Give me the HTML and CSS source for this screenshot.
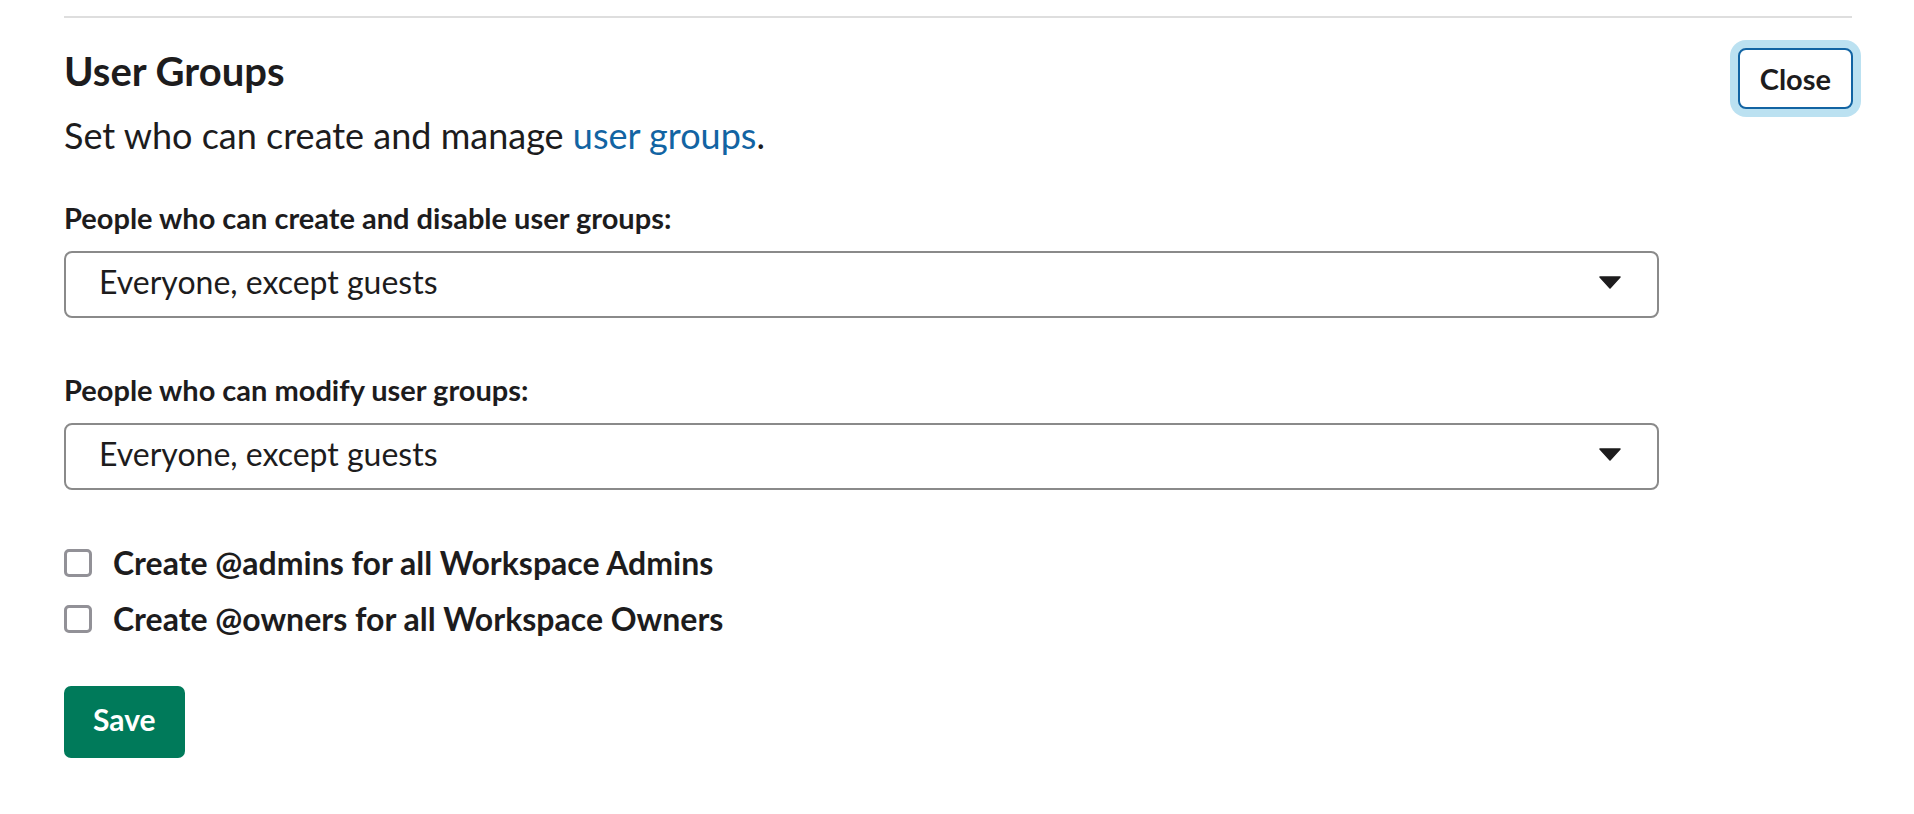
FILE: index.html
```html
<!DOCTYPE html>
<html lang="en">
<head>
  <meta charset="UTF-8" />
  <meta name="viewport" content="width=device-width, initial-scale=1.0"/>
  <title>User Groups</title>
  <link rel="stylesheet" href="styles.css">
</head>
<body>
  <div class="page">
    <div class="divider"></div>

    <div class="section-head">
      <div>
        <h2>User Groups</h2>
        <p class="desc">Set who can create and manage <a href="#">user groups</a>.</p>
      </div>
      <button class="btn-close" type="button">Close</button>
    </div>

    <form class="settings">
      <label class="field-label">People who can create and disable user groups:</label>
      <div class="select">
        <span>Everyone, except guests</span>
        <svg class="caret" width="22" height="13" viewBox="0 0 22 13"><path d="M1 1h20l-10 11z" fill="#1d1c1d" stroke="#1d1c1d" stroke-width="1.5" stroke-linejoin="round"/></svg>
      </div>

      <label class="field-label second">People who can modify user groups:</label>
      <div class="select">
        <span>Everyone, except guests</span>
        <svg class="caret" width="22" height="13" viewBox="0 0 22 13"><path d="M1 1h20l-10 11z" fill="#1d1c1d" stroke="#1d1c1d" stroke-width="1.5" stroke-linejoin="round"/></svg>
      </div>

      <label class="check-row first">
        <input type="checkbox" />
        <span>Create @admins for all Workspace Admins</span>
      </label>
      <label class="check-row">
        <input type="checkbox" />
        <span>Create @owners for all Workspace Owners</span>
      </label>

      <button class="btn-save" type="submit">Save</button>
    </form>
  </div>
</body>
</html>
```

FILE: styles.css
```css
body {
  margin: 0;
  font-family: 'Lato', 'Open Sans', sans-serif;
  color: #1d1c1d;
  background: #fff;
}
.page {
  padding: 16px 61px 40px 64px;
}
.divider {
  height: 2px;
  margin-right: 1px;
  background: #dedede;
}
.section-head {
  display: flex;
  justify-content: space-between;
  align-items: flex-start;
  margin-top: 30px;
}
h2 {
  margin: 0;
  font-size: 40px;
  line-height: 46px;
  font-weight: 700;
}
.desc {
  margin: 21px 0 0;
  font-size: 36px;
  line-height: 40px;
}
.desc a {
  color: #1264a3;
  text-decoration: none;
}
.btn-close {
  height: 61px;
  padding: 0 20px;
  font-family: inherit;
  font-size: 29px;
  font-weight: 700;
  color: #1d1c1d;
  background: #fff;
  border: 2px solid #1264a3;
  border-radius: 8px;
  box-shadow: 0 0 0 8px rgba(29, 155, 209, 0.3);
  cursor: pointer;
}
.settings {
  display: flex;
  flex-direction: column;
  align-items: flex-start;
}
.field-label {
  display: block;
  margin-top: 48px;
  font-size: 29px;
  line-height: 30px;
  font-weight: 700;
}
.field-label.second {
  margin-top: 57px;
}
.select {
  box-sizing: border-box;
  width: 1595px;
  height: 67px;
  margin-top: 18px;
  padding: 0 36px 5px 33px;
  display: flex;
  align-items: center;
  justify-content: space-between;
  border: 2px solid #8a8a8a;
  border-radius: 8px;
  font-size: 32px;
}
.select span {
  margin-bottom: 2px;
}
.caret {
  display: block;
}
.check-row {
  display: flex;
  align-items: center;
  gap: 21px;
  margin-top: 22px;
  font-size: 32px;
  line-height: 34px;
  font-weight: 700;
  cursor: pointer;
}
.check-row.first {
  margin-top: 56px;
}
.check-row input {
  appearance: none;
  -webkit-appearance: none;
  box-sizing: border-box;
  width: 28px;
  height: 28px;
  margin: 0;
  border: 3px solid #929197;
  border-radius: 5px;
  background: #fff;
}
.btn-save {
  margin-top: 50px;
  height: 72px;
  padding: 0 29px 6px;
  font-family: inherit;
  font-size: 30px;
  font-weight: 700;
  color: #fff;
  background: #007a5a;
  border: none;
  border-radius: 7px;
  cursor: pointer;
}
```
